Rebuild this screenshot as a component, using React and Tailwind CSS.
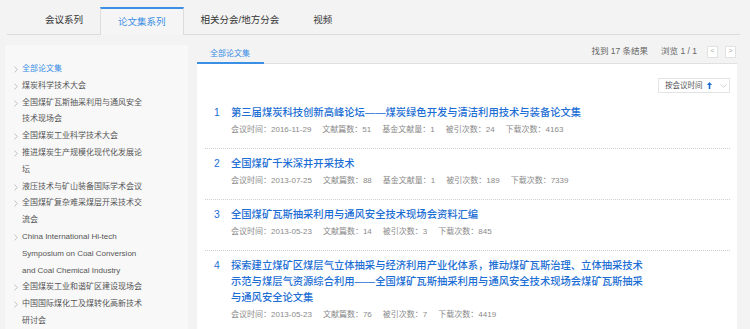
import React from 'react';

const tabs = ['会议系列', '论文集系列', '相关分会/地方分会', '视频'];

const sideItems = [
  '全部论文集',
  '煤炭科学技术大会',
  '全国煤矿瓦斯抽采利用与通风安全技术现场会',
  '全国煤炭工业科学技术大会',
  '推进煤炭生产规模化现代化发展论坛',
  '液压技术与矿山装备国际学术会议',
  '全国煤矿复杂难采煤层开采技术交流会',
  'China International Hi-tech Symposium on Coal Conversion and Coal Chemical Industry',
  '全国煤炭工业和谐矿区建设现场会',
  '中国国际煤化工及煤转化高新技术研讨会',
];

const items = [
  {
    title: '第三届煤炭科技创新高峰论坛——煤炭绿色开发与清洁利用技术与装备论文集',
    meta: ['会议时间：2016-11-29', '文献篇数：51', '基金文献量：1', '被引次数：24', '下载次数：4163'],
  },
  {
    title: '全国煤矿千米深井开采技术',
    meta: ['会议时间：2013-07-25', '文献篇数：88', '基金文献量：1', '被引次数：189', '下载次数：7339'],
  },
  {
    title: '全国煤矿瓦斯抽采利用与通风安全技术现场会资料汇编',
    meta: ['会议时间：2013-05-23', '文献篇数：14', '被引次数：3', '下载次数：845'],
  },
  {
    title:
      '探索建立煤矿区煤层气立体抽采与经济利用产业化体系，推动煤矿瓦斯治理、立体抽采技术示范与煤层气资源综合利用——全国煤矿瓦斯抽采利用与通风安全技术现场会煤矿瓦斯抽采与通风安全论文集',
    meta: ['会议时间：2013-05-23', '文献篇数：76', '被引次数：7', '下载次数：4419'],
  },
];

const Chevron = () => (
  <svg width="4" height="7" viewBox="0 0 4 7" className="mt-[5px]">
    <path d="M0.5 0.5 L3.3 3.5 L0.5 6.5" fill="none" stroke="#b5b5b5" strokeWidth="0.8" />
  </svg>
);

const App = () => {
  return (
    <div className="w-[750px] h-[329px] overflow-hidden bg-[#f3f3f3] font-['Liberation_Sans','Noto_Sans_CJK_SC',sans-serif]">
      {/* top tabs */}
      <div className="h-[35px] ml-[7px] mr-[10px] border-b border-[#dcdcdc] flex items-end pl-[21px]">
        {tabs.map((t, i) =>
          i === 1 ? (
            <div
              key={t}
              className="h-[28px] -mb-px px-[17px] flex items-center bg-[#f5f5f5] border-t-2 border-t-[#3b8fe5] border-x border-x-[#dcdcdc] text-[9.5px] text-[#3b8fe5]"
            >
              {t}
            </div>
          ) : (
            <div key={t} className="h-[27px] px-[17px] flex items-center text-[9.5px] text-[#333]">
              {t}
            </div>
          )
        )}
      </div>

      <div className="flex">
        {/* sidebar */}
        <div className="mt-[10px] ml-[5px] w-[183px] h-[284px] bg-[#f8f8f8] pt-[16px] pl-[9px]">
          {sideItems.map((s, i) => (
            <div key={s} className="flex">
              <div className="w-[8px] shrink-0">
                <Chevron />
              </div>
              <div
                className={`w-[121px] text-[8px] leading-[16.8px] ${i === 0 ? 'text-[#3b8fe5]' : 'text-[#555]'}`}
              >
                {s}
              </div>
            </div>
          ))}
        </div>

        {/* main */}
        <div className="ml-[9px] w-[540px]">
          <div className="h-[29px] border-b border-[#e1e1e1] flex items-end justify-between">
            <div className="-mb-px pl-[13px] pr-[14px] pb-[2px] border-b-2 border-[#3b8fe5] text-[8px] leading-[12px] text-[#3b8fe5]">
              全部论文集
            </div>
            <div className="flex items-center mb-[5px] mr-px text-[8.5px] text-[#666]">
              <span>找到 17 条结果</span>
              <span className="ml-[13px]">浏览 1 / 1</span>
              <span className="ml-[10px] w-[11px] h-[12px] border border-[#e2e2e2] bg-white flex items-center justify-center text-[7px] text-[#aaa]">
                &lt;
              </span>
              <span className="ml-[7px] w-[11px] h-[12px] border border-[#e2e2e2] bg-white flex items-center justify-center text-[7px] text-[#aaa]">
                &gt;
              </span>
            </div>
          </div>

          <div className="bg-white h-[265px] pt-[14px] pl-[8px] pr-[7px]">
            <div className="flex justify-end">
              <div className="w-[72px] h-[15px] border border-[#e3e3e3] flex items-center pl-[6px] text-[7.5px] text-[#555]">
                <span>按会议时间</span>
                <svg width="5" height="7" viewBox="0 0 5 7" className="ml-[4px]">
                  <path d="M2.5 0 L5 3 L3.3 3 L3.3 7 L1.7 7 L1.7 3 L0 3 Z" fill="#1c6ed4" />
                </svg>
                <svg width="7" height="4" viewBox="0 0 7 4" className="ml-[8px]">
                  <path d="M0.5 0.5 L3.5 3.2 L6.5 0.5" fill="none" stroke="#c4c4c4" strokeWidth="0.8" />
                </svg>
              </div>
            </div>

            <div className="mt-[5px]">
              {items.map((it, i) => (
                <div key={i} className="pt-[7px] pb-[10px] border-b border-dotted border-[#cfcfcf] flex">
                  <div className="w-[26px] shrink-0 pl-[9px] text-[10.3px] leading-4 text-[#1c6ed4]">{i + 1}</div>
                  <div>
                    <div className="w-[416px] text-[10.3px] leading-4 font-medium text-[#1c6ed4]">{it.title}</div>
                    <div className="flex gap-x-[11px] text-[8px] leading-[17px] text-[#8a8a8a]">
                      {it.meta.map((m) => (
                        <span key={m}>{m}</span>
                      ))}
                    </div>
                  </div>
                </div>
              ))}
            </div>
          </div>
        </div>
      </div>
    </div>
  );
};

export default App;
